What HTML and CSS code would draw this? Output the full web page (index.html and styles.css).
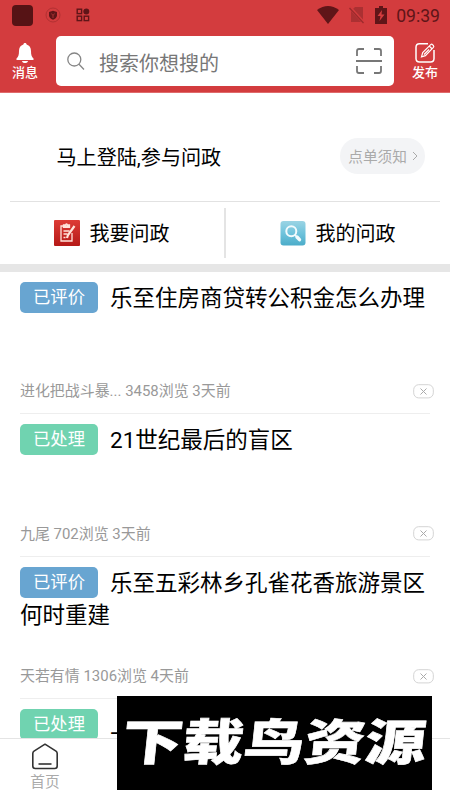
FILE: index.html
```html
<!DOCTYPE html>
<html lang="zh-CN">
<head>
<meta charset="utf-8">
<title>问政</title>
<link rel="stylesheet" href="styles.css">
</head>
<body>
<div class="app">
  <header class="header">
    <div class="status">
      <span class="status-app"></span>
      <svg class="status-shield" width="16" height="16" viewBox="0 0 16 16"><circle cx="8" cy="8" r="7" fill="none" stroke="#a42b2d" stroke-width=".7"/><path d="M8 3.8 12 5v3.2c0 2-1.7 3.6-4 4.6-2.3-1-4-2.600-4-4.600V5z" fill="#5f1518"/><path d="M6.400 6.500 8 8.500l1.600-2M8 8.500V11" fill="none" stroke="#b8383a" stroke-width=".8"/></svg>
      <svg class="status-grid" width="14" height="14" viewBox="0 0 14 14" fill="none" stroke="#5f1518" stroke-width="1.400"><rect x="1.200" y="1.200" width="4.400" height="4.400"/><circle cx="10.300" cy="3.400" r="2.300" fill="#5f1518"/><rect x="1.200" y="8.200" width="4.400" height="4.400"/><rect x="8.200" y="8.200" width="4.400" height="4.400"/></svg>
      <div class="status-right">
        <svg width="22" height="18" viewBox="0 0 22 18"><path d="M0 4Q11-4 22 4L11 18z" fill="#5f1518"/></svg>
        <svg width="16" height="18" viewBox="0 0 16 18"><path d="M6 1h8v15H2V5z" fill="#ab3032"/><path d="M1 1.500 15 17" stroke="#d33c3e" stroke-width="3"/><path d="M.5 2 14.500 17" stroke="#9c2a2c" stroke-width="1.300"/></svg>
        <svg width="12" height="18" viewBox="0 0 12 18"><path d="M4 0h4v2h4v16H0V2h4z" fill="#5f1518"/><path d="M7 4 2.500 10H5.500L4.500 15 9.500 8.500H6.500z" fill="#d33c3e"/></svg>
        <span class="clock">09:39</span>
      </div>
    </div>
    <div class="toolbar">
      <div class="tool">
        <svg width="20" height="22" viewBox="0 0 20 22"><path d="M10 1c1 0 1.600.7 1.600 1.600C14.500 3.400 16 5.800 16 9c0 4 .8 6 2.500 7.500V18h-17v-1.500C3.200 15 4 13 4 9c0-3.200 1.500-5.600 4.400-6.400C8.400 1.700 9 1 10 1zM7 19h6c-.3 1.400-1.400 2-3 2s-2.700-.6-3-2z" fill="#fff"/></svg>
        <span>消息</span>
      </div>
      <div class="search">
        <svg width="18" height="19" viewBox="0 0 18 19" fill="none" stroke="#858585" stroke-width="1.300"><circle cx="7.300" cy="7.500" r="6.500"/><path d="m12 12.300 5 5.200"/></svg>
        <span class="placeholder">搜索你想搜的</span>
        <svg width="26" height="26" viewBox="0 0 26 26" fill="none" stroke="#777" stroke-width="1.800"><path d="M1 8V3q0-2 2-2h5M18 1h5q2 0 2 2v5M1 18v5q0 2 2 2h5M18 25h5q2 0 2-2v-5M0 13h26"/></svg>
      </div>
      <div class="tool">
        <svg width="20" height="22" viewBox="0 0 20 22" fill="none" stroke="#fff" stroke-width="1.500"><path d="M13 1.700H4.500Q1 1.700 1 5.200v11.300Q1 20 4.500 20h11q3.500 0 3.500-3.500V8"/><path d="m6.500 14.800 1.200-4.200 8-8q1-.8 2 .2l.7.7q.8 1 0 1.900l-8 8.200zM14.200 4l3 3M9 12.500l5-5" stroke-width="1.200"/></svg>
        <span>发布</span>
      </div>
    </div>
  </header>

  <section class="login">
    <span class="login-text">马上登陆,参与问政</span>
    <span class="notice">点单须知<svg width="6" height="10" viewBox="0 0 6 10" fill="none" stroke="#aaa" stroke-width="1"><path d="m1 1 4 4-4 4"/></svg></span>
  </section>
  <nav class="actions">
    <a class="action">
      <svg width="26" height="26" viewBox="0 0 26 26"><defs><linearGradient id="red" x2="0" y2="1"><stop stop-color="#dd3c36"/><stop offset="1" stop-color="#b51917"/></linearGradient></defs><rect width="26" height="26" rx="1" fill="url(#red)"/><g fill="none" stroke="#ffe3da" stroke-width="1.300"><path d="M16 6H7v15h11v-8M9.500 7.300V5h2q1-2 2 0h2v2.300zM9.500 11h6M9.500 14h4M9.500 17.500h2"/><path d="m20.500 6-6.500 9-1 3" stroke-width="2.200"/></g></svg>
      <span>我要问政</span>
    </a>
    <a class="action">
      <svg width="26" height="26" viewBox="0 0 26 26"><defs><linearGradient id="blue" x2="0" y2="1"><stop stop-color="#9bd4e4"/><stop offset=".5" stop-color="#6fc3dc"/><stop offset="1" stop-color="#4bacc9"/></linearGradient></defs><rect x=".5" y="1" width="25" height="24.500" rx="3" fill="url(#blue)"/><circle cx="11.300" cy="11.300" r="5" fill="none" stroke="#f2fbfd" stroke-width="2"/><path d="m15 15 1.500 1.500" stroke="#f2fbfd" stroke-width="1.500"/><path d="m17 17 2.500 2.700" stroke="#f2fbfd" stroke-width="3.400" stroke-linecap="round"/></svg>
      <span>我的问政</span>
    </a>
  </nav>

  <main class="list">
    <article class="item">
      <h2 class="title"><span class="tag tag-blue">已评价</span>乐至住房商贷转公积金怎么办理</h2>
      <div class="meta"><span>进化把战斗暴... 3458浏览 3天前</span><svg class="close" width="21" height="15" viewBox="0 0 21 15"><rect x=".7" y=".7" width="19.600" height="13.200" rx="5" fill="none" stroke="#d4d4d4"/><path d="m7.500 4.500 6 6m0-6-6 6" stroke="#aaa"/></svg></div>
    </article>
    <article class="item">
      <h2 class="title"><span class="tag tag-green">已处理</span>21世纪最后的盲区</h2>
      <div class="meta"><span>九尾 702浏览 3天前</span><svg class="close" width="21" height="15" viewBox="0 0 21 15"><rect x=".7" y=".7" width="19.600" height="13.200" rx="5" fill="none" stroke="#d4d4d4"/><path d="m7.500 4.500 6 6m0-6-6 6" stroke="#aaa"/></svg></div>
    </article>
    <article class="item">
      <h2 class="title"><span class="tag tag-blue">已评价</span>乐至五彩林乡孔雀花香旅游景区何时重建</h2>
      <div class="meta"><span>天若有情 1306浏览 4天前</span><svg class="close" width="21" height="15" viewBox="0 0 21 15"><rect x=".7" y=".7" width="19.600" height="13.200" rx="5" fill="none" stroke="#d4d4d4"/><path d="m7.500 4.500 6 6m0-6-6 6" stroke="#aaa"/></svg></div>
    </article>
    <article class="item">
      <h2 class="title"><span class="tag tag-green">已处理</span>上</h2>
    </article>
  </main>

  <footer class="tabbar">
    <a class="tab">
      <svg width="28" height="27" viewBox="0 0 28 27" fill="none" stroke="#333" stroke-width="1.600" stroke-linejoin="round"><path d="M14 1.200 3 8.200Q1.800 9 1.800 10.500V23q0 2.500 2.500 2.500h19.400q2.500 0 2.500-2.500V10.500Q26.200 9 25 8.200z"/><path d="M7.500 21h13"/></svg>
      <span>首页</span>
    </a>
  </footer>
  <div class="banner"><span>下载鸟资源</span></div>
</div>
</body>
</html>
```
FILE: styles.css
```css
* { box-sizing: border-box; }
body {
  margin: 0;
  background: #fff;
  color: #000;
  font-family: Roboto, "Noto Sans CJK SC", sans-serif;
}
svg { display: block; flex: none; }
.app {
  position: relative;
  display: flex;
  flex-direction: column;
  width: 450px;
  height: 800px;
  overflow: hidden;
}
.header {
  flex: none;
  height: 92.5px;
  background: #d33c3e;
  border-bottom: 1px solid #df6a6b;
}
.status {
  display: flex;
  align-items: center;
  height: 30px;
  padding: 0 10px 0 12px;
}
.status-app { width: 21px; height: 21px; border-radius: 4px; background: #561315; }
.status-shield { margin-left: 12px; }
.status-grid { margin-left: 15px; }
.status-right { display: flex; align-items: center; gap: 10px; margin-left: auto; }
.clock { margin-left: -1px; padding-top: 2px; color: #5f1518; font-size: 17.6px; font-weight: 400; line-height: 20px; }
.toolbar { display: flex; align-items: flex-start; padding-top: 6px; }
.tool {
  display: flex;
  flex-direction: column;
  align-items: center;
  width: 50px;
  margin: 6px 0 0;
  color: #fff;
  font-size: 13px;
  font-weight: 500;
  line-height: 18px;
}
.tool:last-child { margin-left: 6px; }
.search {
  display: flex;
  align-items: center;
  width: 338px;
  height: 50px;
  margin-left: 6px;
  padding: 0 12px 0 11px;
  border-radius: 5px;
  background: #fff;
}
.placeholder { flex: 1; margin-left: 14px; padding-top: 5px; color: #777; font-size: 20px; line-height: 28px; }
.login {
  display: flex;
  flex: none;
  align-items: center;
  justify-content: space-between;
  height: 109px;
  margin: 0 10px;
  padding: 18px 15px 0 46.500px;
  border-bottom: 1px solid #e2e2e2;
}
.login-text { padding-top: 1px; font-size: 20.100px; }
.notice {
  display: flex;
  align-items: center;
  gap: 5px;
  height: 36px;
  padding: 0 7px 0 8px;
  border-radius: 18px;
  background: #f3f4f6;
  color: #aaa;
  font-size: 14.700px;
}
.actions {
  display: flex;
  flex: none;
  height: 70px;
  padding: 6px 0 6px;
  border-bottom: 8px solid #e6e6e6;
}
.action {
  display: flex;
  align-items: center;
  gap: 10px;
  width: 224px;
  padding-left: 53.500px;
  font-size: 20px;
}
.action + .action { border-left: 2px solid #e4e4e4; }
.list { flex: 1; min-height: 0; overflow: hidden; }
.item {
  display: flex;
  flex-direction: column;
  justify-content: space-between;
  height: 142.500px;
  margin: 0 20px;
  padding-top: 10px;
  border-bottom: 1px solid #eee;
}
.title { margin: 0 -4px 0 0; font-size: 22.500px; font-weight: 400; line-height: 32px; }
.tag {
  display: inline-block;
  width: 78px;
  height: 31px;
  margin-right: 12px;
  border-radius: 5px;
  color: #fff;
  font-size: 17.300px;
  line-height: 31px;
  text-align: center;
  vertical-align: top;
}
.tag-blue { background: #68a5d1; }
.tag-green { background: #70d3b0; }
.meta {
  display: flex;
  align-items: center;
  justify-content: space-between;
  height: 22px;
  margin: 0 -4px 11px 0;
  color: #999;
  font-size: 14.950px;
  line-height: 22px;
}
.tabbar {
  z-index: 1;
  flex: none;
  height: 62.500px;
  padding: 4px 0 0;
  border-top: 1px solid #e4e4e4;
  background: #fff;
}
.tab {
  display: flex;
  flex-direction: column;
  align-items: center;
  width: 90px;
  color: #aaa;
  font-size: 14.700px;
  line-height: 24px;
}
.banner {
  position: absolute;
  left: 117px;
  top: 696px;
  z-index: 2;
  display: flex;
  align-items: center;
  justify-content: center;
  width: 315px;
  height: 94px;
  background: #000;
  color: #fff;
  font-family: "Noto Sans CJK SC", sans-serif;
  font-size: 49px;
  font-weight: 900;
  line-height: 94px;
  white-space: nowrap;
}
.banner span { margin-top: -8px; transform: skewX(-6deg) scaleX(1.24); -webkit-text-stroke: .6px #fff; }
```
